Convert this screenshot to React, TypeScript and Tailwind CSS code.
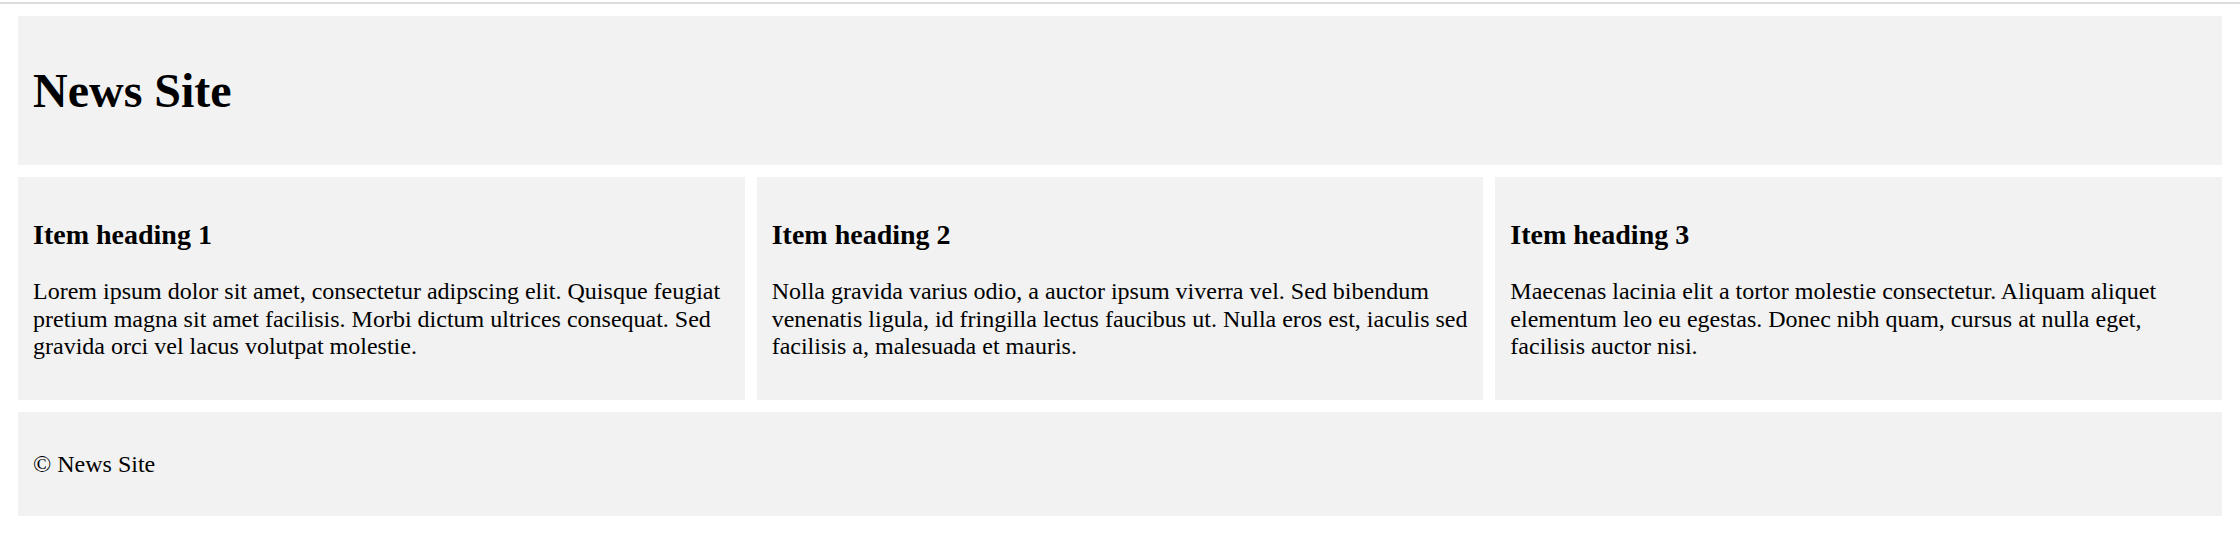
const items = [
  {
    title: "Item heading 1",
    body: "Lorem ipsum dolor sit amet, consectetur adipscing elit. Quisque feugiat pretium magna sit amet facilisis. Morbi dictum ultrices consequat. Sed gravida orci vel lacus volutpat molestie.",
  },
  {
    title: "Item heading 2",
    body: "Nolla gravida varius odio, a auctor ipsum viverra vel. Sed bibendum venenatis ligula, id fringilla lectus faucibus ut. Nulla eros est, iaculis sed facilisis a, malesuada et mauris.",
  },
  {
    title: "Item heading 3",
    body: "Maecenas lacinia elit a tortor molestie consectetur. Aliquam aliquet elementum leo eu egestas. Donec nibh quam, cursus at nulla eget, facilisis auctor nisi.",
  },
];

export default function App() {
  return (
    <div className="min-h-screen bg-white text-black font-['Liberation_Serif','Times_New_Roman',serif] text-[24px] leading-[27.6px]">
      <div className="mt-[2px] h-[2px] bg-[#dcdcdc]" />
      <div className="grid grid-cols-3 gap-[12px] px-[18px] pt-[12px]">
        <header className="col-span-3 bg-[#f2f2f2] p-[15px]">
          <h1 className="my-[32px] text-[48px] leading-[55px] font-bold">News Site</h1>
        </header>
        {items.map((item) => (
          <article key={item.title} className="bg-[#f2f2f2] p-[15px]">
            <h3 className="my-[28px] text-[28px] leading-[30px] font-bold">{item.title}</h3>
            <p className="my-[24px]">{item.body}</p>
          </article>
        ))}
        <footer className="col-span-3 bg-[#f2f2f2] p-[15px]">
          <p className="my-[24px] leading-[26px]">&copy; News Site</p>
        </footer>
      </div>
    </div>
  );
}
